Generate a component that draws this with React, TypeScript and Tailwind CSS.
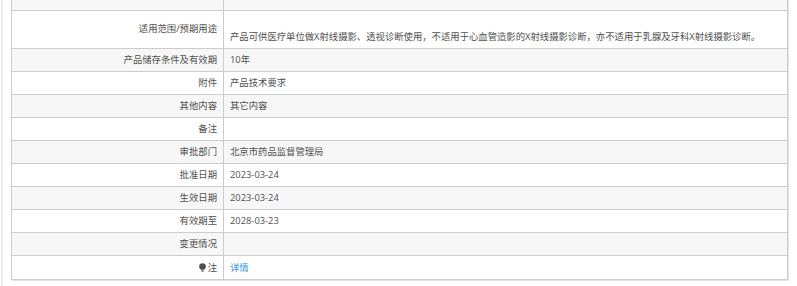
import React from "react";

const rows: { label: React.ReactNode; value: React.ReactNode }[] = [
  { label: "产品储存条件及有效期", value: "10年" },
  { label: "附件", value: "产品技术要求" },
  { label: "其他内容", value: "其它内容" },
  { label: "备注", value: "" },
  { label: "审批部门", value: "北京市药品监督管理局" },
  { label: "批准日期", value: "2023-03-24" },
  { label: "生效日期", value: "2023-03-24" },
  { label: "有效期至", value: "2028-03-23" },
  { label: "变更情况", value: "" },
];

function Pin() {
  return (
    <svg width="7" height="9" viewBox="0 0 7 9" className="inline-block mr-[2px] align-[-1px]">
      <circle cx="3.5" cy="3.5" r="3.3" fill="#4f4f4f" />
      <rect x="2.4" y="6" width="2.2" height="2.8" fill="#777" />
    </svg>
  );
}

export default function App() {
  const font = { fontFamily: '"Open Sans", "Noto Sans CJK SC", sans-serif' };
  return (
    <div className="w-[797px] h-[286px] bg-white overflow-hidden" style={font}>
      <div className="ml-px h-full border-l-2 border-[#ececec] pl-[8px]">
        <div className="w-[777px] grid grid-cols-[211px_563px] gap-px bg-[#cccccc] border border-t-0 border-[#cccccc] shadow-[1px_1px_0_#e4e4e4] text-[9.35px] leading-[14px] text-[#505050]">
          <div className="h-[10px] bg-[#f7f7f7]" />
          <div className="h-[10px] bg-[#f7f7f7]" />
          <div className="h-[37px] bg-white flex items-center justify-end pr-[6px] pb-px">适用范围/预期用途</div>
          <div className="h-[37px] bg-white flex items-end pl-[6px] pb-[4px]">
            产品可供医疗单位做X射线摄影、透视诊断使用，不适用于心血管造影的X射线摄影诊断，亦不适用于乳腺及牙科X射线摄影诊断。
          </div>
          {rows.map((r, i) => {
            const bg = i % 2 === 0 ? "bg-[#f7f7f7]" : "bg-white";
            return (
              <React.Fragment key={i}>
                <div className={`h-[22px] ${bg} flex items-center justify-end pr-[6px]`}>{r.label}</div>
                <div className={`h-[22px] ${bg} flex items-center pl-[6px]`}>{r.value}</div>
              </React.Fragment>
            );
          })}
          <div className="h-[23px] bg-white flex items-center justify-end pr-[6px]">
            <Pin />注
          </div>
          <div className="h-[23px] bg-white flex items-center pl-[6px] text-[#3d8fe6]">详情</div>
        </div>
      </div>
    </div>
  );
}
